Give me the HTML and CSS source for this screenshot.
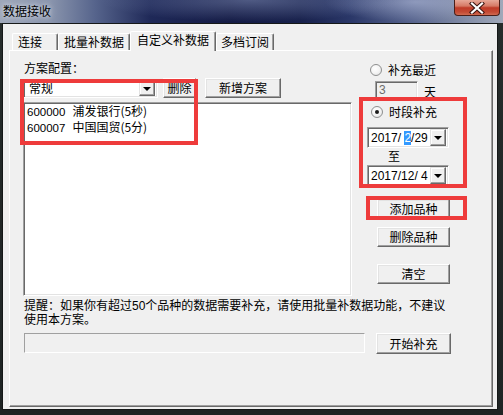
FILE: index.html
```html
<!DOCTYPE html>
<html lang="zh">
<head>
<meta charset="utf-8">
<title>数据接收</title>
<link rel="stylesheet" href="styles.css">
</head>
<body>
<div class="window">
  <div class="titlebar">
    <span class="title">数据接收</span>
    <div class="close">
      <svg width="16" height="12" viewBox="0 0 16 12">
        <path d="M3 1.5 L13 10.5 M13 1.5 L3 10.5" stroke="#3a1410" stroke-width="4.2" stroke-linecap="square"/>
        <path d="M3 1.5 L13 10.5 M13 1.5 L3 10.5" stroke="#ffffff" stroke-width="2.2" stroke-linecap="square"/>
      </svg>
    </div>
  </div>
  <div class="client">
    <div class="tabs">
      <div class="tab t1">连接</div>
      <div class="tab t2">批量补数据</div>
      <div class="tab t3 active">自定义补数据</div>
      <div class="tab t4">多档订阅</div>
    </div>
    <div class="panel">
      <div class="leftcol">
        <div class="label">方案配置：</div>
        <div class="scheme-row">
          <div class="combo">
            <span class="combo-text">常规</span>
            <span class="drop"><i class="arrow"></i></span>
          </div>
          <div class="btn btn-del">删除</div>
          <div class="btn btn-new">新增方案</div>
        </div>
        <div class="listbox">
          <div class="item"><span class="code">600000</span>浦发银行(5秒)</div>
          <div class="item"><span class="code">600007</span>中国国贸(5分)</div>
        </div>
      </div>
      <div class="rightcol">
        <div class="radio-row r1"><span class="radio"></span><span>补充最近</span></div>
        <div class="days-row"><span class="days-input">3</span><span class="days-unit">天</span></div>
        <div class="radio-row r2"><span class="radio checked"></span><span>时段补充</span></div>
        <div class="date d1">
          <span class="date-text">2017/&nbsp;<span class="sel">2</span>/29</span>
          <span class="drop"><i class="arrow"></i></span>
        </div>
        <div class="to">至</div>
        <div class="date d2">
          <span class="date-text">2017/12/&nbsp;4</span>
          <span class="drop"><i class="arrow"></i></span>
        </div>
        <div class="btn side add">添加品种</div>
        <div class="btn side del">删除品种</div>
        <div class="btn side clear">清空</div>
      </div>
      <div class="note">
        <div class="note-line">提醒：如果你有超过50个品种的数据需要补充，请使用批量补数据功能，不建议</div>
        <div class="note-line">使用本方案。</div>
      </div>
      <div class="bottom-row">
        <div class="progress"></div>
        <div class="btn start">开始补充</div>
      </div>
    </div>
  </div>
  <div class="mark m1"></div>
  <div class="mark m2"></div>
  <div class="mark m3"></div>
</div>
</body>
</html>
```

FILE: styles.css
```css
* { box-sizing: border-box; }

html, body {
  margin: 0;
  padding: 0;
}

body {
  width: 503px;
  height: 415px;
  overflow: hidden;
  background: #2a302f;
  font-family: "Noto Sans CJK SC", "Liberation Sans", sans-serif;
  font-size: 12px;
  color: #000;
}

.window {
  position: relative;
  width: 503px;
  height: 415px;
  background:
    linear-gradient(180deg, transparent 0, transparent 23px, #262c2b 23px, #1f2424 100%);
}

.titlebar {
  height: 23px;
  display: flex;
  justify-content: space-between;
  align-items: flex-start;
  background:
    radial-gradient(ellipse 150px 22px at 250px 0, rgba(150, 165, 205, 0.45), transparent),
    radial-gradient(ellipse 90px 20px at 415px 2px, rgba(185, 195, 225, 0.55), transparent),
    linear-gradient(90deg, #9ea7b9 0, #8a95ad 50px, #56648c 95px, #1f2958 150px, #141b45 230px, #18214c 300px, #2a3768 350px, #55628c 410px, #8690a9 470px, #a0a8b9 503px);
}

.title {
  padding-left: 3px;
  line-height: 21px;
  font-size: 12px;
  color: #000;
  text-shadow: 0 0 4px rgba(230, 235, 245, 0.9), 0 0 8px rgba(230, 235, 245, 0.6);
}

.close {
  width: 46px;
  height: 16px;
  margin-right: 3px;
  border: 1px solid #4a1e18;
  border-top: none;
  border-radius: 0 0 4px 4px;
  background: linear-gradient(180deg, #e7a898 0, #d67a66 40%, #bf3b28 52%, #c44a34 80%, #d06a50 100%);
  display: flex;
  align-items: center;
  justify-content: center;
}

.close svg { display: block; }

.client {
  width: 496px;
  height: 387px;
  margin-left: 2px;
  border: 1px solid #151818;
  background: #f0f0f0;
  padding: 7px 0 0 6px;
}

/* tabs */
.tabs {
  display: flex;
  align-items: flex-end;
  height: 19px;
  padding-left: 3px;
  position: relative;
  z-index: 1;
}

.tab {
  height: 17px;
  border-top: 1px solid #fff;
  border-left: 1px solid #fff;
  border-right: 1px solid #696969;
  box-shadow: inset -1px 0 #a0a0a0;
  border-radius: 2px 2px 0 0;
  background: #f0f0f0;
  line-height: 15px;
  text-align: center;
  white-space: nowrap;
}

.t1 { width: 46px; text-align: left; padding-left: 5px; }
.t2 { width: 72px; }
.t3 { width: 86px; }
.t4 { width: 58px; }

.tab.active {
  height: 20px;
  margin-bottom: -1px;
  line-height: 16px;
}

/* panel */
.panel {
  width: 484px;
  height: 357px;
  border-top: 1px solid #fff;
  border-left: 1px solid #fff;
  border-right: 1px solid #696969;
  border-bottom: 1px solid #696969;
  box-shadow: inset -1px -1px #a0a0a0;
  padding: 10px 0 0 13px;
  display: grid;
  grid-template-columns: 329px 131px;
  column-gap: 8px;
  align-content: start;
}

.label {
  line-height: 14px;
  height: 14px;
  margin-left: 1px;
}

.scheme-row {
  display: flex;
  align-items: center;
  height: 20px;
  margin-top: 3px;
}

.combo, .listbox, .date, .days-input, .progress {
  border: 1px solid;
  border-color: #a0a0a0 #fff #fff #a0a0a0;
  box-shadow: inset 1px 1px #696969, inset -1px -1px #e3e3e3;
}

.combo {
  width: 135px;
  height: 19px;
  background: #fff;
  display: flex;
  align-items: center;
  justify-content: space-between;
  padding: 2px;
}

.combo-text {
  padding-left: 3px;
  line-height: 14px;
}

.drop {
  width: 16px;
  height: 15px;
  background: #f0f0f0;
  border: 1px solid;
  border-color: #e3e3e3 #696969 #696969 #e3e3e3;
  box-shadow: inset -1px -1px #a0a0a0, inset 1px 1px #fff;
  display: flex;
  align-items: center;
  justify-content: center;
}

.arrow {
  display: block;
  width: 0;
  height: 0;
  border-left: 4px solid transparent;
  border-right: 4px solid transparent;
  border-top: 4px solid #000;
  margin-top: 1px;
}

.btn {
  height: 20px;
  background: #f0f0f0;
  border: 1px solid;
  border-color: #fff #696969 #696969 #fff;
  box-shadow: inset -1px -1px #a0a0a0, inset 1px 1px #e3e3e3;
  display: flex;
  align-items: center;
  justify-content: center;
  line-height: 14px;
  white-space: nowrap;
}

.btn-del { width: 33px; margin-left: 5px; }
.btn-new { width: 76px; margin-left: 9px; }

.listbox {
  width: 329px;
  height: 194px;
  margin-top: 4px;
  background: #fff;
  padding: 1px 3px;
}

.item {
  line-height: 14.5px;
  white-space: nowrap;
}

.code {
  font-family: "Liberation Sans", sans-serif;
  font-size: 11.5px;
  margin-right: 7px;
}

/* right column */
.rightcol {
  display: flex;
  flex-direction: column;
  align-items: flex-start;
}

.radio-row {
  display: flex;
  align-items: center;
  height: 14px;
  line-height: 14px;
  padding-left: 10px;
}

.r1 { margin-top: 2px; }
.r2 { margin-top: 5px; padding-left: 11px; }

.radio {
  width: 12px;
  height: 12px;
  border-radius: 50%;
  border: 1px solid #8e8f8f;
  background: radial-gradient(circle at 40% 35%, #ffffff 0, #f4f4f4 50%, #dcdcdc 100%);
  margin-right: 6px;
  position: relative;
  flex: none;
}

.radio.checked::after {
  content: "";
  position: absolute;
  left: 3px;
  top: 3px;
  width: 4px;
  height: 4px;
  border-radius: 50%;
  background: #1a1a1a;
}

.days-row {
  display: flex;
  align-items: center;
  margin-top: 4px;
  margin-left: 15px;
  height: 19px;
}

.days-input {
  width: 43px;
  height: 19px;
  background: #f0f0f0;
  color: #6d6d6d;
  font-family: "Liberation Sans", sans-serif;
  font-size: 12px;
  line-height: 15px;
  padding: 1px 3px;
}

.days-unit {
  margin-left: 6px;
  margin-top: 2px;
}

.date {
  width: 82px;
  height: 21px;
  background: #fff;
  margin-left: 7px;
  display: flex;
  align-items: center;
  justify-content: space-between;
  padding: 2px;
}

.d1 { margin-top: 8px; }
.d2 { margin-top: 2px; }

.date-text {
  font-family: "Liberation Sans", sans-serif;
  font-size: 12px;
  line-height: 14px;
  padding-left: 1px;
  white-space: nowrap;
}

.date .drop {
  width: 16px;
  height: 17px;
}

.sel {
  background: #3399ff;
  color: #fff;
}

.to {
  margin-top: 1px;
  margin-left: 28px;
  line-height: 14px;
  height: 14px;
}

.btn.side {
  width: 73px;
  margin-left: 17px;
}

.add { margin-top: 13px; }
.del { margin-top: 8px; }
.clear { margin-top: 17px; }

.note {
  grid-column: 1 / -1;
  margin-top: 3px;
  margin-left: 1px;
  font-family: "Liberation Sans", "Noto Sans CJK SC", sans-serif;
}

.note-line {
  height: 14px;
  line-height: 14px;
  white-space: nowrap;
}

.bottom-row {
  grid-column: 1 / -1;
  display: flex;
  align-items: flex-start;
  margin-top: 6px;
  margin-left: 1px;
}

.progress {
  width: 341px;
  height: 20px;
  background: #f0f0f0;
  box-shadow: none;
  border-color: #a0a0a0 #fff #fff #a0a0a0;
}

.btn.start {
  width: 75px;
  height: 21px;
  margin-left: 11px;
}

/* red annotation overlays */
.mark {
  position: absolute;
  border: 4px solid #ee3b3b;
  pointer-events: none;
}

.m1 { left: 20px; top: 79px; width: 178px; height: 66px; }
.m2 { left: 359px; top: 97px; width: 108px; height: 91px; }
.m3 { left: 366px; top: 196px; width: 101px; height: 24px; }
```
